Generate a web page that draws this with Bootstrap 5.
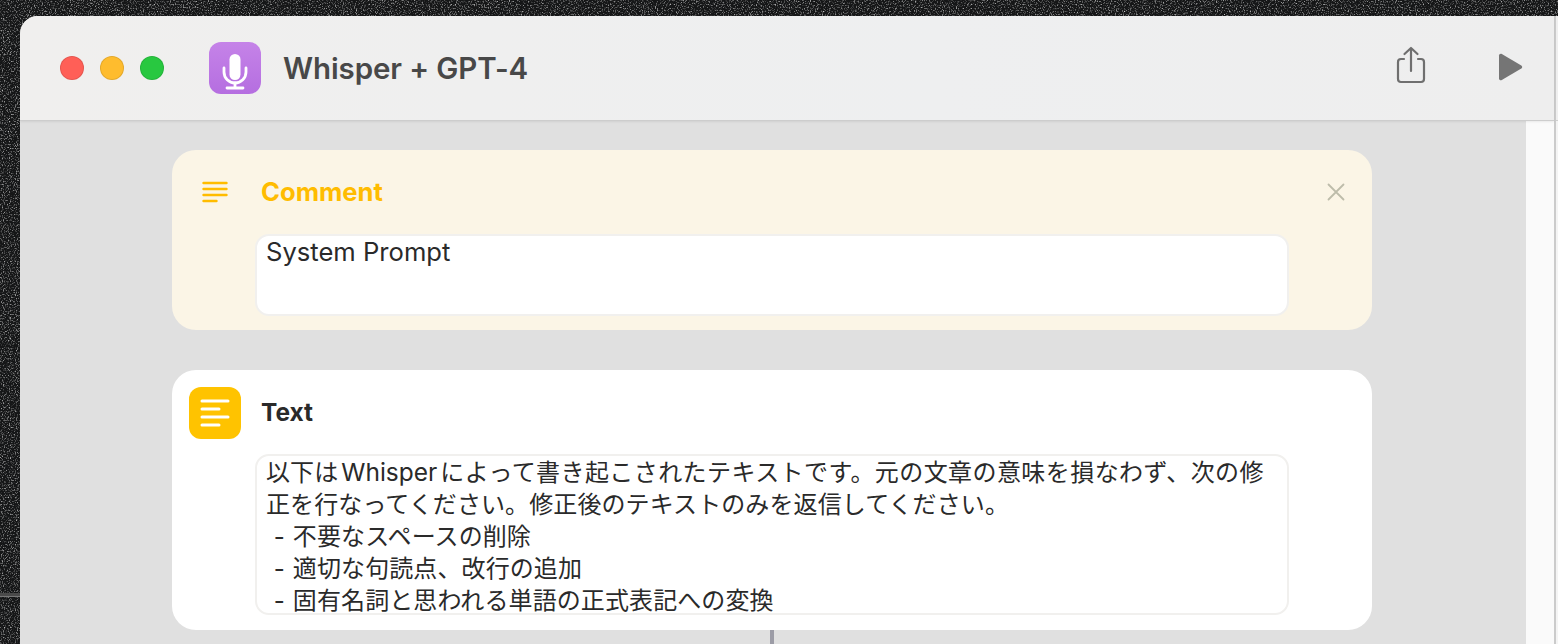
<!doctype html>
<html lang="ja">
<head>
<meta charset="utf-8">
<title>Whisper + GPT-4</title>
<link href="https://cdn.jsdelivr.net/npm/bootstrap@5.3.0/dist/css/bootstrap.min.css" rel="stylesheet">
<style>
html,body{height:644px;overflow:hidden}
body{background-color:#151617;padding:16px 0 0 20px;font-family:Inter,"Noto Sans CJK JP",sans-serif;color:#2a2a2a}
.desk-grain{position:absolute;left:0;top:0;z-index:-1}
.app-win{height:628px;border-top-left-radius:18px;overflow:hidden;background:#e0e0e0}
.win-main{width:1534px;flex:none}
.win-edge{width:4px;flex:none;background:#f4f4f4;border-left:2px solid #cbcbcb}
.edge-top{height:105px;background:#efefef;border-bottom:1px solid #cfcfcf}
.title-bar{height:105px;flex:none;background:linear-gradient(90deg,#f0efee,#eeeff0 60%,#eeeeee);border-bottom:1px solid #cdcdcd;box-shadow:0 1px 2px rgba(0,0,0,.07);position:relative;padding-left:40px;padding-right:30px}
.light{width:24px;height:24px;border-radius:50%;border:1px solid rgba(0,0,0,.1)}
.light-r{background:#ff5f57}.light-y{background:#febc2e}.light-g{background:#28c840}
.lights{gap:16px;margin-right:45px}
.app-icon{width:52px;height:52px;border-radius:12px;background:linear-gradient(180deg,#c583e8,#b56ee0);margin-right:22px}
.win-title{font-size:29.5px;font-weight:600;color:#484848;letter-spacing:-.1px}
.share-ic{margin-right:71px;margin-bottom:6px}
.play-ic{margin-bottom:2px}
.canvas-area{min-height:0}
.canvas-main{background:#e0e0e0;padding:29px 154px 0 152px;width:1506px;flex:none}
.side-strip{background:#fafafa;width:28px;flex:none}
.act-card{width:1200px;border-radius:24px;border:0;padding:0}
.act-comment{background:#fbf5e6;height:180px;margin-bottom:40px}
.act-text{background:#fff;height:260px}
.act-head{height:84px;padding-left:17px;padding-right:26px}
.ic-slot{width:52px;height:52px;margin-right:20px}
.ic-yellow{background:#ffc300;border-radius:12px;margin-top:2px}
.act-name{font-size:24.5px;font-weight:700;line-height:1}
.act-name-y{color:#ffbc00;font-size:25.6px}
.field-box{margin-left:83px;width:1034px;background:#fff;border:2px solid #f1f0ee;border-radius:14px;padding:0 9px;font-size:24px;line-height:32px;word-spacing:1px;letter-spacing:.1px;white-space:nowrap;overflow:hidden}
.field-c{height:82px}
.field-t{height:161px}
.latin-run{font-size:25.6px;letter-spacing:0;word-spacing:0}
.latin-word{font-size:24.5px;letter-spacing:0;margin:0 3px}
.wide-run{letter-spacing:.42px}
.connector{width:4px;height:14px;background:#9c9ca6;margin-left:598px}
</style>
</head>
<body>
<svg class="desk-grain" width="1558" height="644" aria-hidden="true">
  <filter id="grain" x="0" y="0" width="100%" height="100%">
    <feTurbulence type="fractalNoise" baseFrequency=".85 .7" numOctaves="2" seed="7"/>
    <feColorMatrix values="0 0 0 0 1  0 0 0 0 1  0 0 0 0 1  2 0 0 0 -1.020"/>
  </filter>
  <rect width="1558" height="644" filter="url(#grain)"/>
  <rect x="0" y="593" width="20" height="4" fill="#4a4a4a"/>
  <rect x="0" y="596" width="20" height="1" fill="#777"/>
</svg>
<div class="app-win d-flex">
  <div class="win-main d-flex flex-column">
    <div class="title-bar d-flex align-items-center">
      <div class="lights d-flex">
        <span class="light light-r"></span><span class="light light-y"></span><span class="light light-g"></span>
      </div>
      <div class="app-icon d-flex align-items-center justify-content-center">
        <svg width="28" height="44" viewBox="0 0 28 44" fill="none" stroke="#fff" stroke-linecap="round" aria-hidden="true">
          <rect x="8.500" y="8" width="11" height="26" rx="5.500" fill="#fff" stroke="none"/>
          <path d="M3 22v4a11 11 0 0 0 22 0v-4" stroke-width="2.800"/>
          <path d="M14 37v5M6 42h16" stroke-width="2.800"/>
        </svg>
      </div>
      <div class="win-title">Whisper + GPT-4</div>
      <div class="ms-auto d-flex align-items-center">
        <svg class="share-ic" width="32" height="40" viewBox="0 0 32 40" fill="none" stroke="#6f6f6f" stroke-width="2.200" stroke-linecap="round" stroke-linejoin="round" aria-hidden="true">
          <path d="M9 14H6a3 3 0 0 0-3 3v17a3 3 0 0 0 3 3h20a3 3 0 0 0 3-3V17a3 3 0 0 0-3-3h-3"/>
          <path d="M16 26V3M9.500 9 16 3l6.500 6"/>
        </svg>
        <svg class="play-ic" width="26" height="30" viewBox="0 0 26 30" aria-hidden="true"><path d="M1 3.500c0-1.500 1.500-2.300 2.800-1.600l19.500 11.500c1.200.8 1.200 2.400 0 3.200L3.800 28.100C2.500 28.800 1 28 1 26.500z" fill="#757575"/></svg>
      </div>
    </div>
    <div class="canvas-area d-flex flex-grow-1">
      <div class="canvas-main">
        <div class="card act-card act-comment">
          <div class="act-head d-flex align-items-center">
            <div class="ic-slot d-flex align-items-center justify-content-center">
              <svg width="26" height="22" viewBox="0 0 26 22" stroke="#ffbc00" stroke-width="2.400" stroke-linecap="round" aria-hidden="true"><path d="M1.500 2h23M1.500 8h23M1.500 14h23M1.500 20h13"/></svg>
            </div>
            <div class="act-name act-name-y">Comment</div>
            <svg class="ms-auto" width="20" height="20" viewBox="0 0 20 20" stroke="#bdbcaa" stroke-width="1.800" stroke-linecap="round" aria-hidden="true"><path d="M2.500 2.500l15 15M17.500 2.500l-15 15"/></svg>
          </div>
          <div class="field-box field-c"><span class="latin-run">System Prompt</span></div>
        </div>
        <div class="card act-card act-text">
          <div class="act-head d-flex align-items-center">
            <div class="ic-slot ic-yellow d-flex align-items-center justify-content-center">
              <svg width="30" height="28" viewBox="0 0 30 28" stroke="#fff" stroke-width="3" stroke-linecap="round" aria-hidden="true"><path d="M2 2h26M2 10h17M2 18h26M2 26h17"/></svg>
            </div>
            <div class="act-name">Text</div>
          </div>
          <div class="field-box field-t">
            <div><span>以下は</span><span class="latin-word">Whisper</span><span class="wide-run">によって書き起こされたテキストです。元の文章の意味を損なわず、次の修</span></div>
            <div>正を行なってください。修正後のテキストのみを返信してください。</div>
            <div>&nbsp;- 不要なスペースの削除</div>
            <div>&nbsp;- 適切な句読点、改行の追加</div>
            <div>&nbsp;- 固有名詞と思われる単語の正式表記への変換</div>
          </div>
        </div>
        <div class="connector"></div>
      </div>
      <div class="side-strip"></div>
    </div>
  </div>
  <div class="win-edge"><div class="edge-top"></div></div>
</div>
</body>
</html>
